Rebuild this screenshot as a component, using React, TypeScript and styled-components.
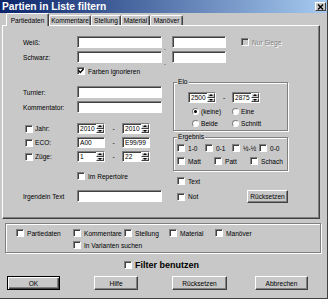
import React from 'react';
import styled, { createGlobalStyle, css } from 'styled-components';

const FONT = '"Liberation Sans", Arial, Helvetica, sans-serif';
const FACE = '#c8c8c8';
const LIGHT = '#ffffff';
const SHADOW = '#808080';
const DARK = '#404040';

const GlobalStyle = createGlobalStyle`
    * { box-sizing: border-box; }
    body {
        margin: 0;
        background: ${FACE};
        font-family: ${FONT};
        font-size: 6.6px;
        color: #000;
    }
`;

const Window = styled.div`
    width: 328px;
    height: 299px;
    display: flex;
    flex-direction: column;
    background: ${FACE};
    border-right: 1px solid ${DARK};
    border-bottom: 1px solid ${DARK};
    overflow: hidden;
`;

const TitleBar = styled.div`
    height: 13px;
    flex: none;
    display: flex;
    align-items: center;
    padding: 0 1px 0 2px;
    background: linear-gradient(to right, #0a246a, #a6caf0);
`;

const Title = styled.span`
    color: #fff;
    font-weight: bold;
    font-size: 10.2px;
    line-height: 13px;
    white-space: nowrap;
`;

const CloseButton = styled.div`
    margin-left: auto;
    width: 11px;
    height: 9px;
    display: flex;
    align-items: center;
    justify-content: center;
    background: ${FACE};
    border: 1px solid;
    border-color: ${LIGHT} ${DARK} ${DARK} ${LIGHT};
`;

const TabStrip = styled.div`
    height: 12px;
    flex: none;
    display: flex;
    align-items: flex-end;
    padding-left: 6px;
    position: relative;
    z-index: 1;
`;

const Tab = styled.div<{ $active?: boolean; $width: number }>`
    width: ${p => p.$width}px;
    height: ${p => (p.$active ? 13 : 10)}px;
    margin-bottom: ${p => (p.$active ? -1 : 0)}px;
    flex: none;
    display: flex;
    align-items: center;
    justify-content: center;
    background: ${FACE};
    border: 1px solid;
    border-bottom: none;
    border-color: ${LIGHT} ${DARK} transparent ${LIGHT};
    border-radius: 2px 2px 0 0;
    box-shadow: inset -1px 0 0 ${SHADOW};
    white-space: nowrap;
`;

const Panel = styled.div`
    margin-left: 2px;
    width: 318px;
    height: 194px;
    flex: none;
    display: flex;
    flex-direction: column;
    border: 1px solid;
    border-color: ${LIGHT} ${DARK} ${DARK} ${LIGHT};
    box-shadow: inset -1px -1px 0 ${SHADOW};
`;

const Row = styled.div<{ $top?: number; $height?: number; $indent?: number }>`
    display: flex;
    align-items: center;
    flex: none;
    margin-top: ${p => p.$top ?? 0}px;
    height: ${p => p.$height ?? 12}px;
    padding-left: ${p => p.$indent ?? 0}px;
`;

const Label = styled.span<{ $width?: number }>`
    width: ${p => p.$width ?? 54}px;
    flex: none;
    display: flex;
    align-items: center;
    white-space: nowrap;
`;

const Sep = styled.span<{ $width: number; $low?: boolean }>`
    width: ${p => p.$width}px;
    flex: none;
    text-align: center;
    ${p => p.$low && css`
        align-self: flex-end;
        transform: translateY(3px);
        text-align: left;
        padding-left: 2px;
    `}
`;

const Field = styled.div<{ $width: number; $height?: number }>`
    width: ${p => p.$width}px;
    height: ${p => p.$height ?? 12}px;
    flex: none;
    display: flex;
    align-items: center;
    padding-left: 2px;
    background: #fff;
    border: 1px solid;
    border-color: ${SHADOW} ${LIGHT} ${LIGHT} ${SHADOW};
    box-shadow: inset 1px 1px 0 ${DARK};
    overflow: hidden;
    white-space: nowrap;
`;

const SpinField = styled(Field)`
    justify-content: space-between;
`;

const SpinButtons = styled.div`
    width: 8px;
    height: 100%;
    display: flex;
    flex-direction: column;
`;

const SpinArrow = styled.div<{ $down?: boolean }>`
    flex: 1;
    display: flex;
    align-items: center;
    justify-content: center;
    background: ${FACE};
    border: 1px solid;
    border-color: ${LIGHT} ${DARK} ${DARK} ${LIGHT};

    &::after {
        content: '';
        border-left: 2px solid transparent;
        border-right: 2px solid transparent;
        ${p => (p.$down ? 'border-top' : 'border-bottom')}: 2px solid #000;
    }
`;

const CheckItem = styled.span<{ $indent?: number }>`
    display: flex;
    align-items: center;
    margin-left: ${p => p.$indent ?? 0}px;
    white-space: nowrap;
`;

const CheckBox = styled.span<{ $disabled?: boolean }>`
    width: 8px;
    height: 8px;
    flex: none;
    display: flex;
    align-items: center;
    justify-content: center;
    background: ${p => (p.$disabled ? FACE : '#fff')};
    border: 1px solid;
    border-color: ${SHADOW} ${LIGHT} ${LIGHT} ${SHADOW};
    box-shadow: inset 1px 1px 0 ${DARK};
`;

const CheckText = styled.span<{ $gap: number; $disabled?: boolean; $bold?: boolean }>`
    margin-left: ${p => p.$gap}px;
    ${p => p.$disabled && css`
        color: ${SHADOW};
        text-shadow: 1px 1px 0 ${LIGHT};
    `}
    ${p => p.$bold && css`
        font-weight: bold;
        font-size: 9px;
    `}
`;

const RadioDot = styled.span<{ $on?: boolean }>`
    width: 7px;
    height: 7px;
    flex: none;
    display: flex;
    align-items: center;
    justify-content: center;
    border-radius: 50%;
    background: #fff;
    border: 1px solid;
    border-color: ${SHADOW} ${LIGHT} ${LIGHT} ${SHADOW};

    &::after {
        content: '';
        width: 3px;
        height: 3px;
        border-radius: 50%;
        background: #000;
        display: ${p => (p.$on ? 'block' : 'none')};
    }
`;

const RadioItem = styled.span`
    width: 40px;
    flex: none;
    display: flex;
    align-items: center;
    gap: 2px;
    white-space: nowrap;
`;

const GroupBox = styled.div<{ $top: number; $height: number; $pad: string; $left?: number; $width?: number }>`
    position: relative;
    flex: none;
    margin-top: ${p => p.$top}px;
    margin-left: ${p => p.$left ?? 0}px;
    ${p => p.$width && `width: ${p.$width}px;`}
    height: ${p => p.$height}px;
    padding: ${p => p.$pad};
    border: 1px solid ${SHADOW};
    box-shadow: inset 1px 1px 0 ${LIGHT}, 1px 1px 0 ${LIGHT};
`;

const Legend = styled.span`
    position: absolute;
    top: -5px;
    left: 3px;
    padding: 0 1px;
    line-height: 8px;
    background: ${FACE};
`;

const Columns = styled.div`
    display: flex;
    margin-top: 5px;
`;

const LeftColumn = styled.div`
    width: 170px;
    flex: none;
    display: flex;
    flex-direction: column;
    padding-left: 20px;
`;

const RightColumn = styled.div`
    width: 115px;
    flex: none;
    display: flex;
    flex-direction: column;
`;

const ResultGrid = styled.div<{ $cols: string; $top?: number }>`
    display: grid;
    grid-template-columns: ${p => p.$cols};
    height: 8px;
    margin-top: ${p => p.$top ?? 0}px;
    align-items: center;
`;

const OptionGrid = styled.div`
    display: grid;
    grid-template-columns: 57px 51px 45px 46px auto;
    grid-auto-rows: 8px;
    row-gap: 4px;
`;

const GridCell = styled.div<{ $col?: string }>`
    display: flex;
    align-items: center;
    grid-column: ${p => p.$col ?? 'auto'};
`;

const Button = styled.button<{ $width: number; $gap?: number; $height?: number; $default?: boolean; $right?: boolean }>`
    width: ${p => p.$width}px;
    height: ${p => p.$height ?? 14}px;
    margin-left: ${p => (p.$right ? 'auto' : `${p.$gap ?? 0}px`)};
    flex: none;
    padding: 0;
    display: flex;
    align-items: center;
    justify-content: center;
    font: inherit;
    color: #000;
    background: ${FACE};
    border: 1px solid;
    border-color: ${LIGHT} ${DARK} ${DARK} ${LIGHT};
    box-shadow: inset -1px -1px 0 ${SHADOW};
    ${p => p.$default && css`
        border-color: #000;
        box-shadow: inset 1px 1px 0 ${LIGHT}, inset -1px -1px 0 ${DARK}, inset -2px -2px 0 ${SHADOW};
    `}
`;

interface CheckProps {
    label: string;
    checked?: boolean;
    disabled?: boolean;
    gap?: number;
    indent?: number;
    bold?: boolean;
}

const Check = ({ label, checked, disabled, gap = 3, indent, bold }: CheckProps) => (
    <CheckItem $indent={indent}>
        <CheckBox $disabled={disabled}>
            {checked && (
                <svg width="6" height="6" viewBox="0 0 6 6">
                    <path d="M0.6 2.6 L2.3 4.4 L5.5 0.9" stroke="#000" strokeWidth="1.4" fill="none" />
                </svg>
            )}
        </CheckBox>
        <CheckText $gap={gap} $disabled={disabled} $bold={bold}>{label}</CheckText>
    </CheckItem>
);

const Spin = ({ value, width = 28 }: { value: string; width?: number }) => (
    <SpinField $width={width} $height={11}>
        <span>{value}</span>
        <SpinButtons>
            <SpinArrow />
            <SpinArrow $down />
        </SpinButtons>
    </SpinField>
);

const Radio = ({ label, on }: { label: string; on?: boolean }) => (
    <RadioItem>
        <RadioDot $on={on} />
        <span>{label}</span>
    </RadioItem>
);

const tabs = [
    { name: 'Partiedaten', width: 43, active: true },
    { name: 'Kommentare', width: 42 },
    { name: 'Stellung', width: 30 },
    { name: 'Material', width: 29 },
    { name: 'Manöver', width: 33 },
];

export default function App() {
    return (
        <>
            <GlobalStyle />
            <Window>
                <TitleBar>
                    <Title>Partien in Liste filtern</Title>
                    <CloseButton>
                        <svg width="7" height="6" viewBox="0 0 7 6">
                            <path d="M1 0.5 L6 5.5 M6 0.5 L1 5.5" stroke="#000" strokeWidth="1.4" />
                        </svg>
                    </CloseButton>
                </TitleBar>

                <TabStrip>
                    {tabs.map(t => (
                        <Tab key={t.name} $width={t.width} $active={t.active}>{t.name}</Tab>
                    ))}
                </TabStrip>

                <Panel>
                    <Row $top={10} $indent={20}>
                        <Label>Weiß:</Label>
                        <Field $width={85} />
                        <Sep $width={10} $low>.</Sep>
                        <Field $width={54} />
                        <Sep $width={15} />
                        <Check label="Nur Siege" disabled />
                    </Row>
                    <Row $top={3} $indent={20}>
                        <Label>Schwarz:</Label>
                        <Field $width={85} />
                        <Sep $width={10} $low>.</Sep>
                        <Field $width={54} />
                    </Row>
                    <Row $top={4} $height={8} $indent={20}>
                        <Label />
                        <Check label="Farben ignorieren" checked />
                    </Row>

                    <Columns>
                        <LeftColumn>
                            <Row $top={6}>
                                <Label>Turnier:</Label>
                                <Field $width={85} />
                            </Row>
                            <Row $top={3}>
                                <Label>Kommentator:</Label>
                                <Field $width={85} />
                            </Row>
                            <Row $top={10} $height={11}>
                                <Label><Check label="Jahr:" indent={2} gap={2} /></Label>
                                <Spin value="2010" />
                                <Sep $width={17}>-</Sep>
                                <Spin value="2010" />
                            </Row>
                            <Row $top={3} $height={11}>
                                <Label><Check label="ECO:" indent={2} gap={2} /></Label>
                                <Field $width={28} $height={11}>A00</Field>
                                <Sep $width={17}>-</Sep>
                                <Field $width={28} $height={11}>E99/99</Field>
                            </Row>
                            <Row $top={3} $height={11}>
                                <Label><Check label="Züge:" indent={2} gap={2} /></Label>
                                <Spin value="1" />
                                <Sep $width={17}>-</Sep>
                                <Spin value="22" />
                            </Row>
                            <Row $top={10} $height={8}>
                                <Label />
                                <Check label="Im Repertoire" />
                            </Row>
                            <Row $top={10}>
                                <Label>Irgendein Text</Label>
                                <Field $width={85} />
                            </Row>
                        </LeftColumn>

                        <RightColumn>
                            <GroupBox $top={2} $height={49} $pad="9px 0 0 14px">
                                <Legend>Elo</Legend>
                                <Row $height={11}>
                                    <Spin value="2500" />
                                    <Sep $width={16}>-</Sep>
                                    <Spin value="2875" />
                                </Row>
                                <Row $top={5} $height={7} $indent={4}>
                                    <Radio label="(keine)" on />
                                    <Radio label="Eine" />
                                </Row>
                                <Row $top={5} $height={7} $indent={4}>
                                    <Radio label="Beide" />
                                    <Radio label="Schnitt" />
                                </Row>
                            </GroupBox>

                            <GroupBox $top={6} $height={34} $pad="6px 0 0 3px">
                                <Legend>Ergebnis</Legend>
                                <ResultGrid $cols="28px 27px 27px auto">
                                    <Check label="1-0" />
                                    <Check label="0-1" />
                                    <Check label="½-½" />
                                    <Check label="0-0" />
                                </ResultGrid>
                                <ResultGrid $cols="37px 36px auto" $top={5}>
                                    <Check label="Matt" />
                                    <Check label="Patt" />
                                    <Check label="Schach" />
                                </ResultGrid>
                            </GroupBox>

                            <Row $top={6} $height={8} $indent={4}>
                                <Check label="Text" />
                            </Row>
                            <Row $top={5} $height={13} $indent={4}>
                                <Check label="Not" />
                                <Button $width={41} $height={13} $right>Rücksetzen</Button>
                            </Row>
                        </RightColumn>
                    </Columns>
                </Panel>

                <GroupBox $top={4} $left={5} $width={316} $height={30} $pad="5px 0 0 10px">
                    <OptionGrid>
                        <GridCell><Check label="Partiedaten" /></GridCell>
                        <GridCell><Check label="Kommentare" /></GridCell>
                        <GridCell><Check label="Stellung" /></GridCell>
                        <GridCell><Check label="Material" /></GridCell>
                        <GridCell><Check label="Manöver" /></GridCell>
                        <GridCell $col="2 / 5"><Check label="In Varianten suchen" /></GridCell>
                    </OptionGrid>
                </GroupBox>

                <Row $top={8} $height={8} $indent={124}>
                    <Check label="Filter benutzen" bold />
                </Row>

                <Row $top={7} $height={14}>
                    <Button $width={53} $gap={7} $default>OK</Button>
                    <Button $width={44} $gap={34}>Hilfe</Button>
                    <Button $width={55} $gap={34}>Rücksetzen</Button>
                    <Button $width={53} $gap={28}>Abbrechen</Button>
                </Row>
            </Window>
        </>
    );
}
